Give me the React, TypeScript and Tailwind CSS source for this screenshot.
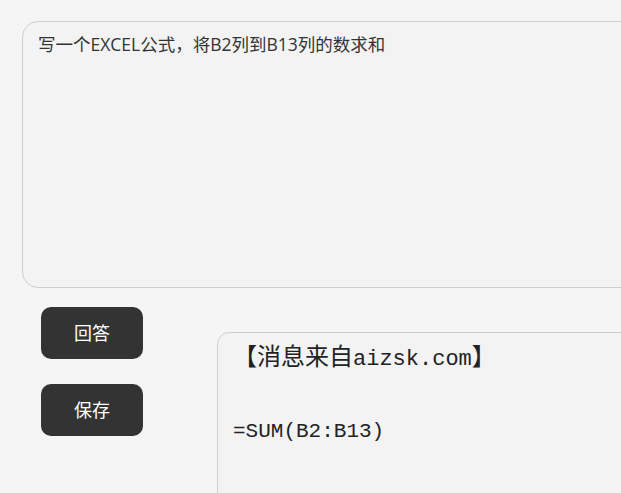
export default function App() {
	return (
		<div className="w-screen h-screen overflow-hidden bg-[#f5f5f5] pt-[21px] pl-[22px]" style={{ fontFamily: '"Open Sans", "Noto Sans CJK SC", sans-serif' }}>
			<div className="w-[660px] h-[267px] rounded-[16px] border border-[#cfcfcf] bg-[#f3f3f3] px-[15px] pt-[9px] text-[17.5px] leading-[26px] text-[#333]">
				写一个EXCEL公式，将B2列到B13列的数求和
			</div>

			<div className="flex flex-row mt-[19px]">
				<div className="flex flex-col shrink-0 gap-[25px] pl-[19px] w-[195px]">
					<button className="w-[102px] h-[52px] rounded-[10px] bg-[#333333] text-white text-[18px]">回答</button>
					<button className="w-[102px] h-[52px] rounded-[10px] bg-[#333333] text-white text-[18px]">保存</button>
				</div>

				<div className="mt-[25px] w-[500px] h-[300px] shrink-0 rounded-[12px] border border-[#cfcfcf] bg-[#f3f3f3] pl-[15px] pt-[8px] text-[21px] leading-[36px] text-[#222]" style={{ fontFamily: '"Liberation Mono", "Noto Sans CJK SC", monospace' }}>
					<div className="text-[22px]">
						<span className="text-[24px]">【消息来自</span>aizsk.com<span className="text-[24px]">】</span>
					</div>
					<div>&nbsp;</div>
					<div>=SUM(B2:B13)</div>
				</div>
			</div>
		</div>
	);
}
